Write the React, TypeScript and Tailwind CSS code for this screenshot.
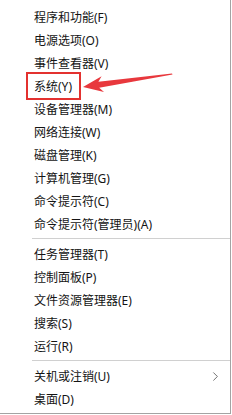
import { ChevronRight } from 'lucide-react';

const groups = [
  [
    '程序和功能(F)',
    '电源选项(O)',
    '事件查看器(V)',
    '系统(Y)',
    '设备管理器(M)',
    '网络连接(W)',
    '磁盘管理(K)',
    '计算机管理(G)',
    '命令提示符(C)',
    '命令提示符(管理员)(A)',
  ],
  ['任务管理器(T)', '控制面板(P)', '文件资源管理器(E)', '搜索(S)', '运行(R)'],
  ['关机或注销(U)', '桌面(D)'],
];

const MenuRow = ({ label, sub }: { label: string; sub?: boolean }) => (
  <div className="flex h-[23px] items-center pl-[34px]">
    <span className="text-[12px] leading-none text-[#141414]">{label}</span>
    {sub && <ChevronRight className="ml-auto mr-[7px] h-[15px] w-[15px] text-[#333]" strokeWidth={1.1} />}
  </div>
);

export default function App() {
  return (
    <div
      className="relative h-[414px] w-[231px] overflow-hidden border-b border-r border-[#a3a3a3] bg-white pt-[6px]"
      style={{ fontFamily: '"Noto Sans", "Noto Sans CJK SC", sans-serif' }}
    >
      {groups.map((items, gi) => (
        <div key={gi}>
          {gi > 0 && <div className="mb-[4px] ml-[32px] mt-[2px] h-px bg-[#d0d0d0]" />}
          {items.map((label) => (
            <MenuRow key={label} label={label} sub={label.startsWith('关机')} />
          ))}
        </div>
      ))}

      {/* annotation: red box + arrow */}
      <svg className="pointer-events-none absolute left-0 top-0" width="231" height="414">
        <rect x="27" y="73" width="53" height="26" fill="none" stroke="#e3312f" strokeWidth="2" />
        <polygon
          points="83,87 101.6,76.2 98.4,81.7 172,73.5 172.5,74.5 99.2,87.7 104,92"
          fill="#e8383d"
        />
      </svg>
    </div>
  );
}
